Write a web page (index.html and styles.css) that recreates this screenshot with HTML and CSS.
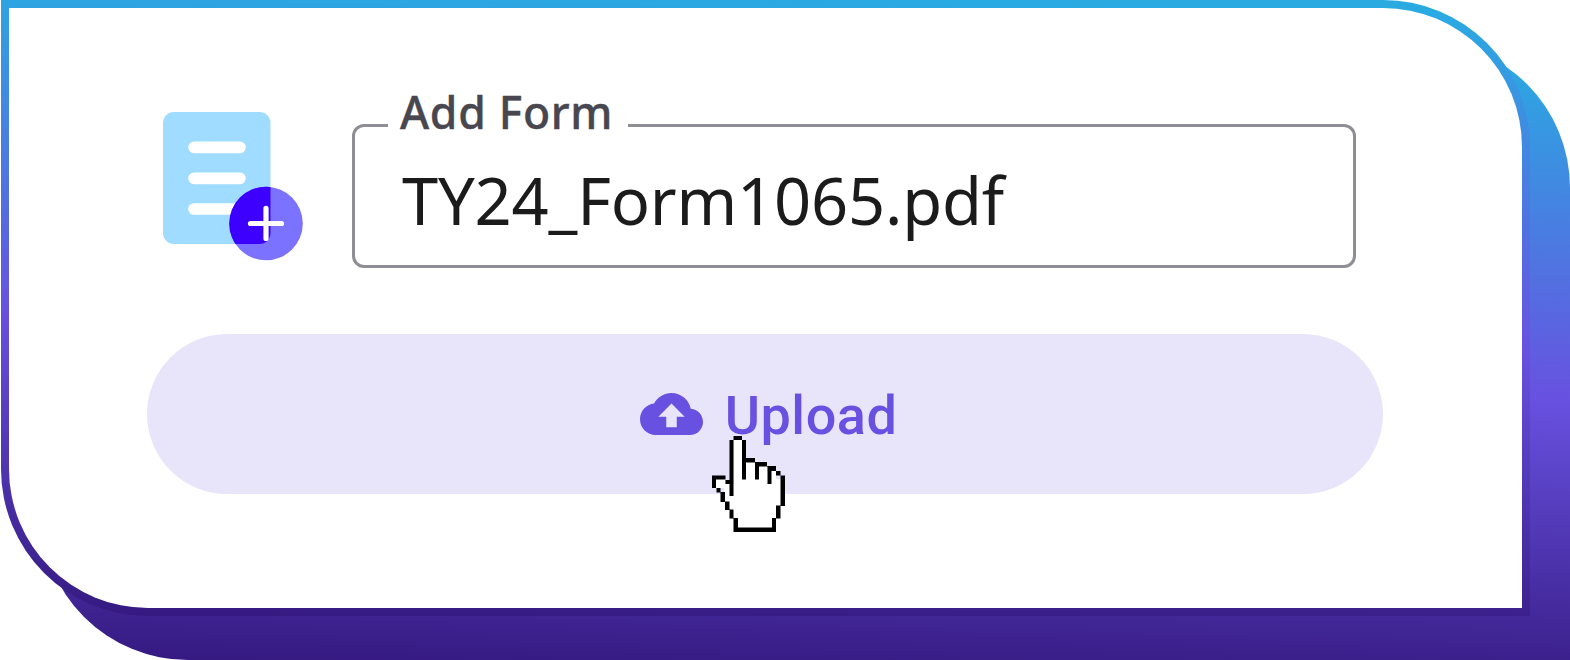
FILE: index.html
```html
<!DOCTYPE html>
<html lang="en">
<head>
<meta charset="utf-8">
<title>Add Form</title>
<link rel="stylesheet" href="styles.css">
</head>
<body>
<main class="stage">
  <section class="panel">
    <div class="form-row">
      <svg class="doc-icon" viewBox="0 0 141 150" aria-hidden="true">
        <defs><clipPath id="page"><rect x="0" y="0" width="107.500" height="132" rx="11"/></clipPath></defs>
        <rect width="107.500" height="132" rx="11" fill="#9fdcff"/>
        <path d="M31 35.300H77M31 66.300H77M31 97H77" stroke="#fff" stroke-width="11.700" stroke-linecap="round"/>
        <circle cx="103" cy="111.500" r="36.800" fill="#7b72ff"/>
        <circle cx="103" cy="111.500" r="36.800" fill="#3d00ff" clip-path="url(#page)"/>
        <path d="M87.500 111.500H118.500M103 96.300V126.500" stroke="#fff" stroke-width="5.200" stroke-linecap="round"/>
      </svg>
      <fieldset class="field">
        <legend class="field-label">Add Form</legend>
        <div class="field-value">TY24_Form1065.pdf</div>
      </fieldset>
    </div>
    <button class="upload" type="button">
      <svg class="cloud" viewBox="0 4 24 16" aria-hidden="true"><path fill="currentColor" d="M19.350 10.040C18.670 6.590 15.640 4 12 4 9.110 4 6.600 5.640 5.350 8.040 2.340 8.360 0 10.910 0 14c0 3.310 2.690 6 6 6h13c2.760 0 5-2.240 5-5 0-2.640-2.050-4.780-4.650-4.960zM14 13v4h-4v-4H7l5-5 5 5h-3z"/></svg>
      <span class="upload-text">Upload</span>
    </button>
    <svg class="cursor" viewBox="0 0 73 96" aria-hidden="true">
      <path fill="#fff" d="M22 4H30V26H43V30H55V35H64V43H69V67H65V80H60V92H25V80H21V71H17V62H12V52H4V43H13V48H22Z"/>
      <path fill="#000" d="M21.500 0H30V4H34V22H43V26H55V30H64V35H68.500V39.500H73V70H68.500V82.500H64V96H21.500V82.500H17.500V74H13V66H8.500V56.500H4.500V52H0V39.500H13.500V44H17.500V4H21.500ZM30 4H21.500V60H17.500V48H13.500V43.500H4V52H8.500V56H13V65.500H17.500V73.500H21.500V82H26V91.500H60V82H64V69.500H68.500V39.500H64V35H59.500V48H55.500V30.500H47V43.500H43V26.500H34V43.500H30Z" fill-rule="evenodd"/>
    </svg>
  </section>
</main>
</body>
</html>
```
FILE: styles.css
```css
* { box-sizing: border-box; }

body {
  margin: 0;
  background: #fff;
  font-family: "Noto Sans", sans-serif;
}

.stage {
  position: relative;
  width: 1570px;
  height: 660px;
  padding-left: 1px;
  overflow: hidden;
}

/* offset slab behind the panel */
.stage::before {
  content: "";
  position: absolute;
  left: 41px;
  top: 41px;
  width: 1529px;
  height: 619px;
  border-radius: 0 147px 0 147px;
  background: linear-gradient(181.500deg, #29abe2 2%, #6851e0 54.500%, #351980 100%);
}

.panel {
  position: relative;
  width: 1529px;
  height: 616px;
  padding: 85px 138px 0;
  border: 8px solid transparent;
  border-radius: 0 147px 0 147px;
  background:
    linear-gradient(#fff, #fff) padding-box,
    linear-gradient(181.500deg, #29abe2 2%, #6851e0 53.500%, #351980 100%) border-box;
}

.form-row {
  display: flex;
  padding-left: 16px;
}

.doc-icon {
  width: 141px;
  height: 150px;
  margin: 19px 48px 0 0;
}

.field {
  width: 1004px;
  height: 175px;
  min-width: 0;
  margin: 0;
  padding: 0 46px 0 33px;
  border: 3px solid #8f8e96;
  border-radius: 12px;
}

.field-label {
  width: 240px;
  height: 64px;
  padding: 0 0 0 12px;
  color: #48464f;
  font-size: 44.500px;
  font-weight: 500;
  letter-spacing: 0.700px;
  line-height: 37px;
  white-space: nowrap;
  -webkit-text-stroke: 0.400px #48464f;
}

.field-value {
  margin: 0 0 0 14px;
  color: #1c1b1c;
  font-size: 65px;
  letter-spacing: -0.200px;
  line-height: 87px;
  white-space: nowrap;
}

.upload {
  display: flex;
  align-items: center;
  justify-content: center;
  width: 1236px;
  height: 160px;
  margin-top: 66px;
  padding: 0 0 0 7px;
  gap: 22px;
  border: 0;
  border-radius: 80px;
  background: #e8e5fa;
  color: #6851e0;
}

.cloud {
  width: 63px;
  height: 42px;
}

.upload-text {
  padding-top: 4px;
  font: 500 54px/60px Roboto, sans-serif;
  letter-spacing: 0.500px;
}

.cursor {
  position: absolute;
  left: 703px;
  top: 428px;
  width: 73px;
  height: 96px;
}
```
